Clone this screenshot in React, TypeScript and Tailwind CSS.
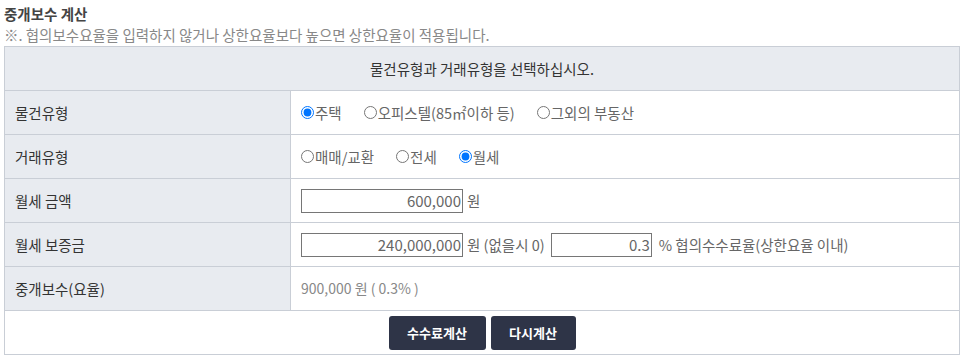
import React from "react";

const font = { fontFamily: '"Noto Sans CJK KR", "Noto Sans", sans-serif' };

function Radio({ label, checked, name }: { label: string; checked?: boolean; name: string }) {
  return (
    <label className="flex items-center mr-[22px] text-[#666]">
      <input type="radio" name={name} defaultChecked={checked} className="w-[13px] h-[13px] m-0" />
      <span className="ml-[1px]">{label}</span>
    </label>
  );
}

function Row({ label, children }: { label: string; children: React.ReactNode }) {
  return (
    <div className="flex h-[44px] border-b border-[#c9ced6]">
      <div className="w-[286px] shrink-0 bg-[#e8ebf0] border-r border-[#c9ced6] flex items-center pl-[10px] text-[#333]">
        {label}
      </div>
      <div className="flex-1 flex items-center pl-[10px] text-[#666]">{children}</div>
    </div>
  );
}

export default function App() {
  return (
    <div className="bg-white w-[964px] h-[360px] text-[14.5px]" style={font}>
      <div className="pl-[4px] pt-[3px] leading-[21px] font-bold text-[#444]">중개보수 계산</div>
      <div className="pl-[4px] leading-[21px] text-[#888] mb-[1px]">
        ※. 협의보수요율을 입력하지 않거나 상한요율보다 높으면 상한요율이 적용됩니다.
      </div>
      <div className="ml-[4px] w-[956px] border-t border-l border-r border-[#c9ced6]">
        <div className="h-[44px] bg-[#e8ebf0] border-b border-[#c9ced6] flex items-center justify-center text-[#333]">
          물건유형과 거래유형을 선택하십시오.
        </div>
        <Row label="물건유형">
          <Radio name="t1" label="주택" checked />
          <Radio name="t1" label="오피스텔(85㎡이하 등)" />
          <Radio name="t1" label="그외의 부동산" />
        </Row>
        <Row label="거래유형">
          <Radio name="t2" label="매매/교환" />
          <Radio name="t2" label="전세" />
          <Radio name="t2" label="월세" checked />
        </Row>
        <Row label="월세 금액">
          <input
            readOnly
            value="600,000"
            className="w-[162px] h-[24px] border border-[#767676] text-right pr-[1px] text-[15px] text-[#666] outline-none"
          />
          <span className="ml-[4px]">원</span>
        </Row>
        <Row label="월세 보증금">
          <input
            readOnly
            value="240,000,000"
            className="w-[162px] h-[24px] border border-[#767676] text-right pr-[1px] text-[15px] text-[#666] outline-none"
          />
          <span className="ml-[4px]">원 (없을시 0)</span>
          <input
            readOnly
            value="0.3"
            className="ml-[6px] w-[101px] h-[24px] border border-[#767676] text-right pr-[1px] text-[15px] text-[#666] outline-none"
          />
          <span className="ml-[7px]">% 협의수수료율(상한요율 이내)</span>
        </Row>
        <Row label="중개보수(요율)">
          <span className="text-[#888] text-[14px]">900,000 원 ( 0.3% )</span>
        </Row>
        <div className="h-[44px] border-b border-[#c9ced6] flex items-center justify-center gap-[5px]">
          <button className="w-[97px] h-[34px] rounded-[3px] bg-[#2e3447] text-white font-bold text-[13px]">
            수수료계산
          </button>
          <button className="w-[85px] h-[34px] rounded-[3px] bg-[#2e3447] text-white font-bold text-[13px]">
            다시계산
          </button>
        </div>
      </div>
    </div>
  );
}
